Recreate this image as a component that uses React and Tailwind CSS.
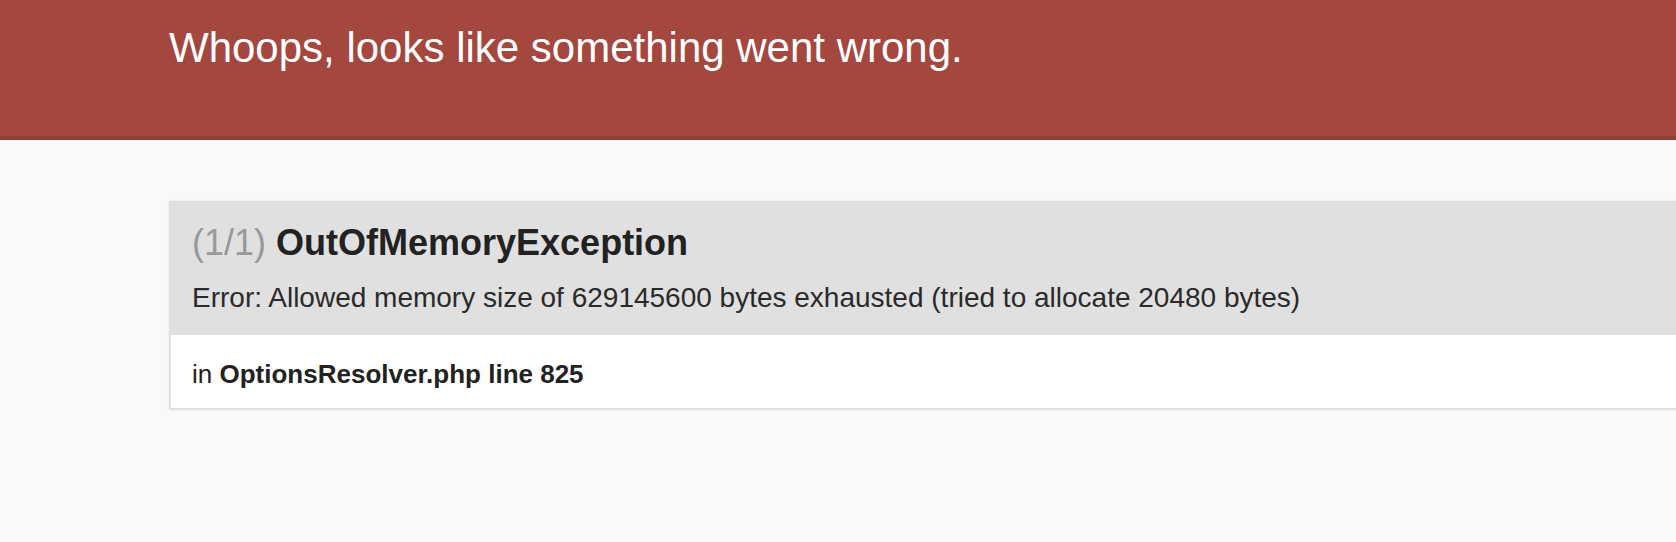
import React from 'react'

// Symfony-style exception page, rendered at 2x scale
export default function App() {
  return (
    <div className="min-h-screen bg-[#f9f9f9] text-[#222] font-['Liberation_Sans',Arial,sans-serif] overflow-hidden">
      {/* Red summary bar */}
      <div className="bg-[#a4473f] border-b-4 border-black/10">
        <h1 className="pl-[169px] pt-[18px] pb-[59px] text-[42px] leading-[59px] font-normal text-white whitespace-nowrap">
          Whoops, looks like something went wrong.
        </h1>
      </div>

      {/* Trace block */}
      <div className="pl-[169px] pt-[61px]">
        <div className="w-[1700px] bg-white border-2 border-[#e0e0e0] shadow-[0_0_2px_rgba(128,128,128,0.2)]">
          <div className="bg-[#e0e0e0] px-[21px] pt-[16px] pb-[16px]">
            <h3 className="text-[36px] leading-[47px] font-bold whitespace-nowrap">
              <span className="text-[#999] font-normal">(1/1)</span>{' '}
              <span>OutOfMemoryException</span>
            </h3>
            <p className="mt-[12px] pb-[2px] text-[28px] leading-[39px] text-[#2a2a2a] whitespace-nowrap">
              Error: Allowed memory size of 629145600 bytes exhausted (tried to allocate 20480 bytes)
            </p>
          </div>
          <div className="px-[21px] pt-[19px] pb-[13px] text-[26px] leading-[41px] whitespace-nowrap">
            in <strong className="font-bold">OptionsResolver.php line 825</strong>
          </div>
        </div>
      </div>
    </div>
  )
}
